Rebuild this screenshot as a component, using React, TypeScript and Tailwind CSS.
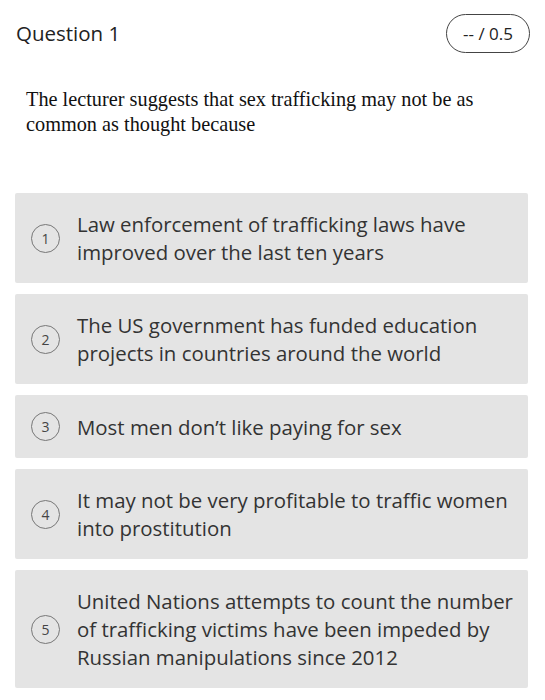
const options = [
  "Law enforcement of trafficking laws have improved over the last ten years",
  "The US government has funded education projects in countries around the world",
  "Most men don\u2019t like paying for sex",
  "It may not be very profitable to traffic women into prostitution",
  "United Nations attempts to count the number of trafficking victims have been impeded by Russian manipulations since 2012",
];

export default function App() {
  return (
    <div className="min-h-[700px] bg-white px-[15px] pt-[14px] text-[#222]">
      <div className="flex items-center justify-between pl-[1px]">
        <h2 className="font-['Open_Sans',sans-serif] text-[20.5px] leading-[39px] font-normal">
          Question 1
        </h2>
        <div className="flex h-[39px] w-[84px] items-center justify-center rounded-full border-[1.5px] border-[#444] font-['Open_Sans',sans-serif] text-[17px]">
          -- / 0.5
        </div>
      </div>

      <p className="mt-[34px] pl-[11px] pr-[36px] font-['Liberation_Serif',serif] text-[20.3px] leading-[25px] text-[#111]">
        The lecturer suggests that sex trafficking may not be as common as thought because
      </p>

      <ul className="mt-[56px] flex w-[513px] flex-col gap-[11px]">
        {options.map((text, i) => (
          <li
            key={i}
            className="flex items-center gap-[17px] rounded-[2px] bg-[#e4e4e4] py-[17px] pl-[16px] pr-[12px]"
          >
            <span className="flex h-[29px] w-[29px] shrink-0 items-center justify-center rounded-full border-[1.5px] border-[#777] font-['Open_Sans',sans-serif] text-[14px] text-[#444]">
              {i + 1}
            </span>
            <span className="font-['Open_Sans',sans-serif] text-[20.4px] leading-[28px] text-[#333]">
              {text}
            </span>
          </li>
        ))}
      </ul>
    </div>
  );
}
